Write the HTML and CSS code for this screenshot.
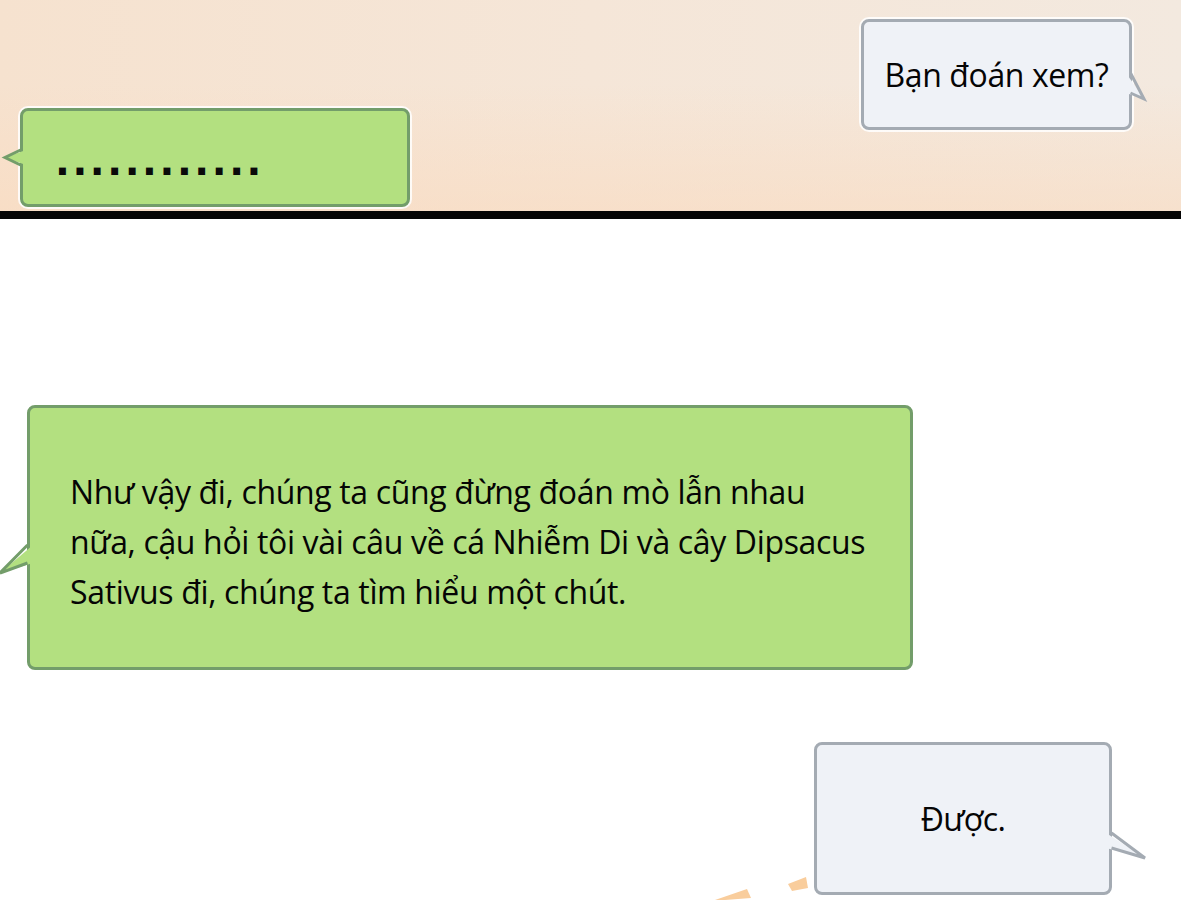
FILE: index.html
```html
<!DOCTYPE html>
<html lang="vi">
<head>
    <meta charset="UTF-8">
    <meta name="viewport" content="width=device-width, initial-scale=1.0">
    <title>Chat</title>
    <link rel="stylesheet" href="styles.css">
</head>
<body>
    <div class="page">
        <!-- top panel -->
        <div class="panel-top">
            <div class="bubble green bubble-dots">
                <svg class="tail tail-left-small" viewBox="0 0 22 16">
                    <polygon points="22,0 1,7.5 22,15" />
                    <polyline points="16.5,0 1,7.5 16.5,15" />
                </svg>
                <span class="dots">............</span>
            </div>
            <div class="bubble grey bubble-guess">
                <svg class="tail tail-right-top" viewBox="0 0 22 28">
                    <polygon points="0,0 18,26 0,20" />
                    <polyline points="4.5,0 18,26 4.5,20" />
                </svg>
                <span class="text">Bạn đoán xem?</span>
            </div>
        </div>

        <div class="divider"></div>

        <!-- bottom panel -->
        <div class="panel-bottom">
            <div class="bubble green bubble-big">
                <svg class="tail tail-left-big" viewBox="0 0 34 30">
                    <polygon points="34,0 1,28 34,18" />
                    <polyline points="28.5,0 1,28 28.5,18" />
                </svg>
                <p class="text">Như vậy đi, chúng ta cũng đừng đoán mò lẫn nhau<br>nữa, cậu hỏi tôi vài câu về cá Nhiễm Di và cây Dipsacus<br>Sativus đi, chúng ta tìm hiểu một chút.</p>
            </div>

            <div class="bubble grey bubble-ok">
                <svg class="tail tail-right-bottom" viewBox="0 0 40 27">
                    <polygon points="0,0 39,25 0,15" />
                    <polyline points="5.5,0 39,25 5.5,15" />
                </svg>
                <span class="text">Được.</span>
            </div>

            <svg class="strokes" viewBox="0 0 140 40">
                <polygon points="20,40 52,29 56,38 30,40" />
                <polygon points="93,24 111,17 113,28 97,31" />
            </svg>
        </div>
    </div>
</body>
</html>
```

FILE: styles.css
```css
* {
    margin: 0;
    padding: 0;
    box-sizing: border-box;
}

body {
    background: #ffffff;
    font-family: "Open Sans", "Noto Sans", sans-serif;
    color: #050505;
}

.page {
    width: 1181px;
    height: 900px;
    overflow: hidden;
}

/* panels */
.panel-top {
    height: 211px;
    display: flex;
    justify-content: space-between;
    padding: 0 49px 4px 20px;
    background:
        linear-gradient(180deg, rgba(246, 232, 218, 0) 40%, rgba(250, 218, 190, 0.55) 100%),
        linear-gradient(90deg, #f6e2cf 0%, #f5e6d8 50%, #f3e9df 100%);
}

.divider {
    height: 8px;
    background: #050505;
}

.panel-bottom {
    position: relative;
    height: 681px;
    padding-top: 186px;
    background: #ffffff;
}

/* bubbles */
.bubble {
    position: relative;
    border-radius: 8px;
    border: 3px solid;
}

.bubble.green {
    background: #b3e080;
    border-color: #739d6a;
}

.bubble.grey {
    background: #eff2f7;
    border-color: #a4abb3;
}

.tail {
    position: absolute;
    overflow: visible;
}

.tail polyline {
    fill: none;
    stroke-width: 3;
    stroke-linejoin: miter;
}

.green .tail polygon {
    fill: #b3e080;
}

.green .tail polyline {
    stroke: #739d6a;
}

.grey .tail polygon {
    fill: #eff2f7;
}

.grey .tail polyline {
    stroke: #a4abb3;
}

.bubble-dots {
    align-self: flex-end;
    width: 390px;
    height: 99px;
    padding: 31px 0 0 32px;
    box-shadow: 0 0 0 2px rgba(255, 255, 255, 0.85);
}

.dots {
    font-family: "DejaVu Sans", sans-serif;
    font-weight: bold;
    font-size: 39px;
    line-height: 40px;
    letter-spacing: 2.6px;
    color: #0a0a0a;
}

.tail-left-small {
    left: -19px;
    top: 39px;
    width: 22px;
    height: 16px;
}

.bubble-guess {
    align-self: flex-start;
    margin-top: 19px;
    width: 271px;
    height: 111px;
    display: flex;
    justify-content: center;
    padding-top: 33px;
    box-shadow: 0 0 0 2px rgba(255, 255, 255, 0.85);
}

.bubble-guess .text {
    font-size: 32px;
    line-height: 40px;
    letter-spacing: -0.4px;
}

.tail-right-top {
    right: -19px;
    top: 51px;
    width: 22px;
    height: 28px;
}

.bubble-big {
    margin-left: 27px;
    width: 886px;
    height: 265px;
    display: flex;
    align-items: center;
    padding: 8px 0 0 40px;
}

.bubble-big .text {
    font-size: 32px;
    line-height: 50px;
    letter-spacing: -0.35px;
}

.tail-left-big {
    left: -31px;
    top: 137px;
    width: 34px;
    height: 30px;
}

.bubble-ok {
    margin: 72px 0 0 814px;
    width: 298px;
    height: 153px;
    display: flex;
    justify-content: center;
    padding: 52px 0 0 0;
}

.bubble-ok .text {
    font-size: 32px;
    line-height: 44px;
    letter-spacing: -0.6px;
}

.tail-right-bottom {
    right: -37px;
    top: 88px;
    width: 40px;
    height: 27px;
}

/* decorative brush strokes in the corner */
.strokes {
    position: absolute;
    left: 695px;
    top: 641px;
    width: 140px;
    height: 40px;
}

.strokes polygon {
    fill: #f9cd9c;
}
```
